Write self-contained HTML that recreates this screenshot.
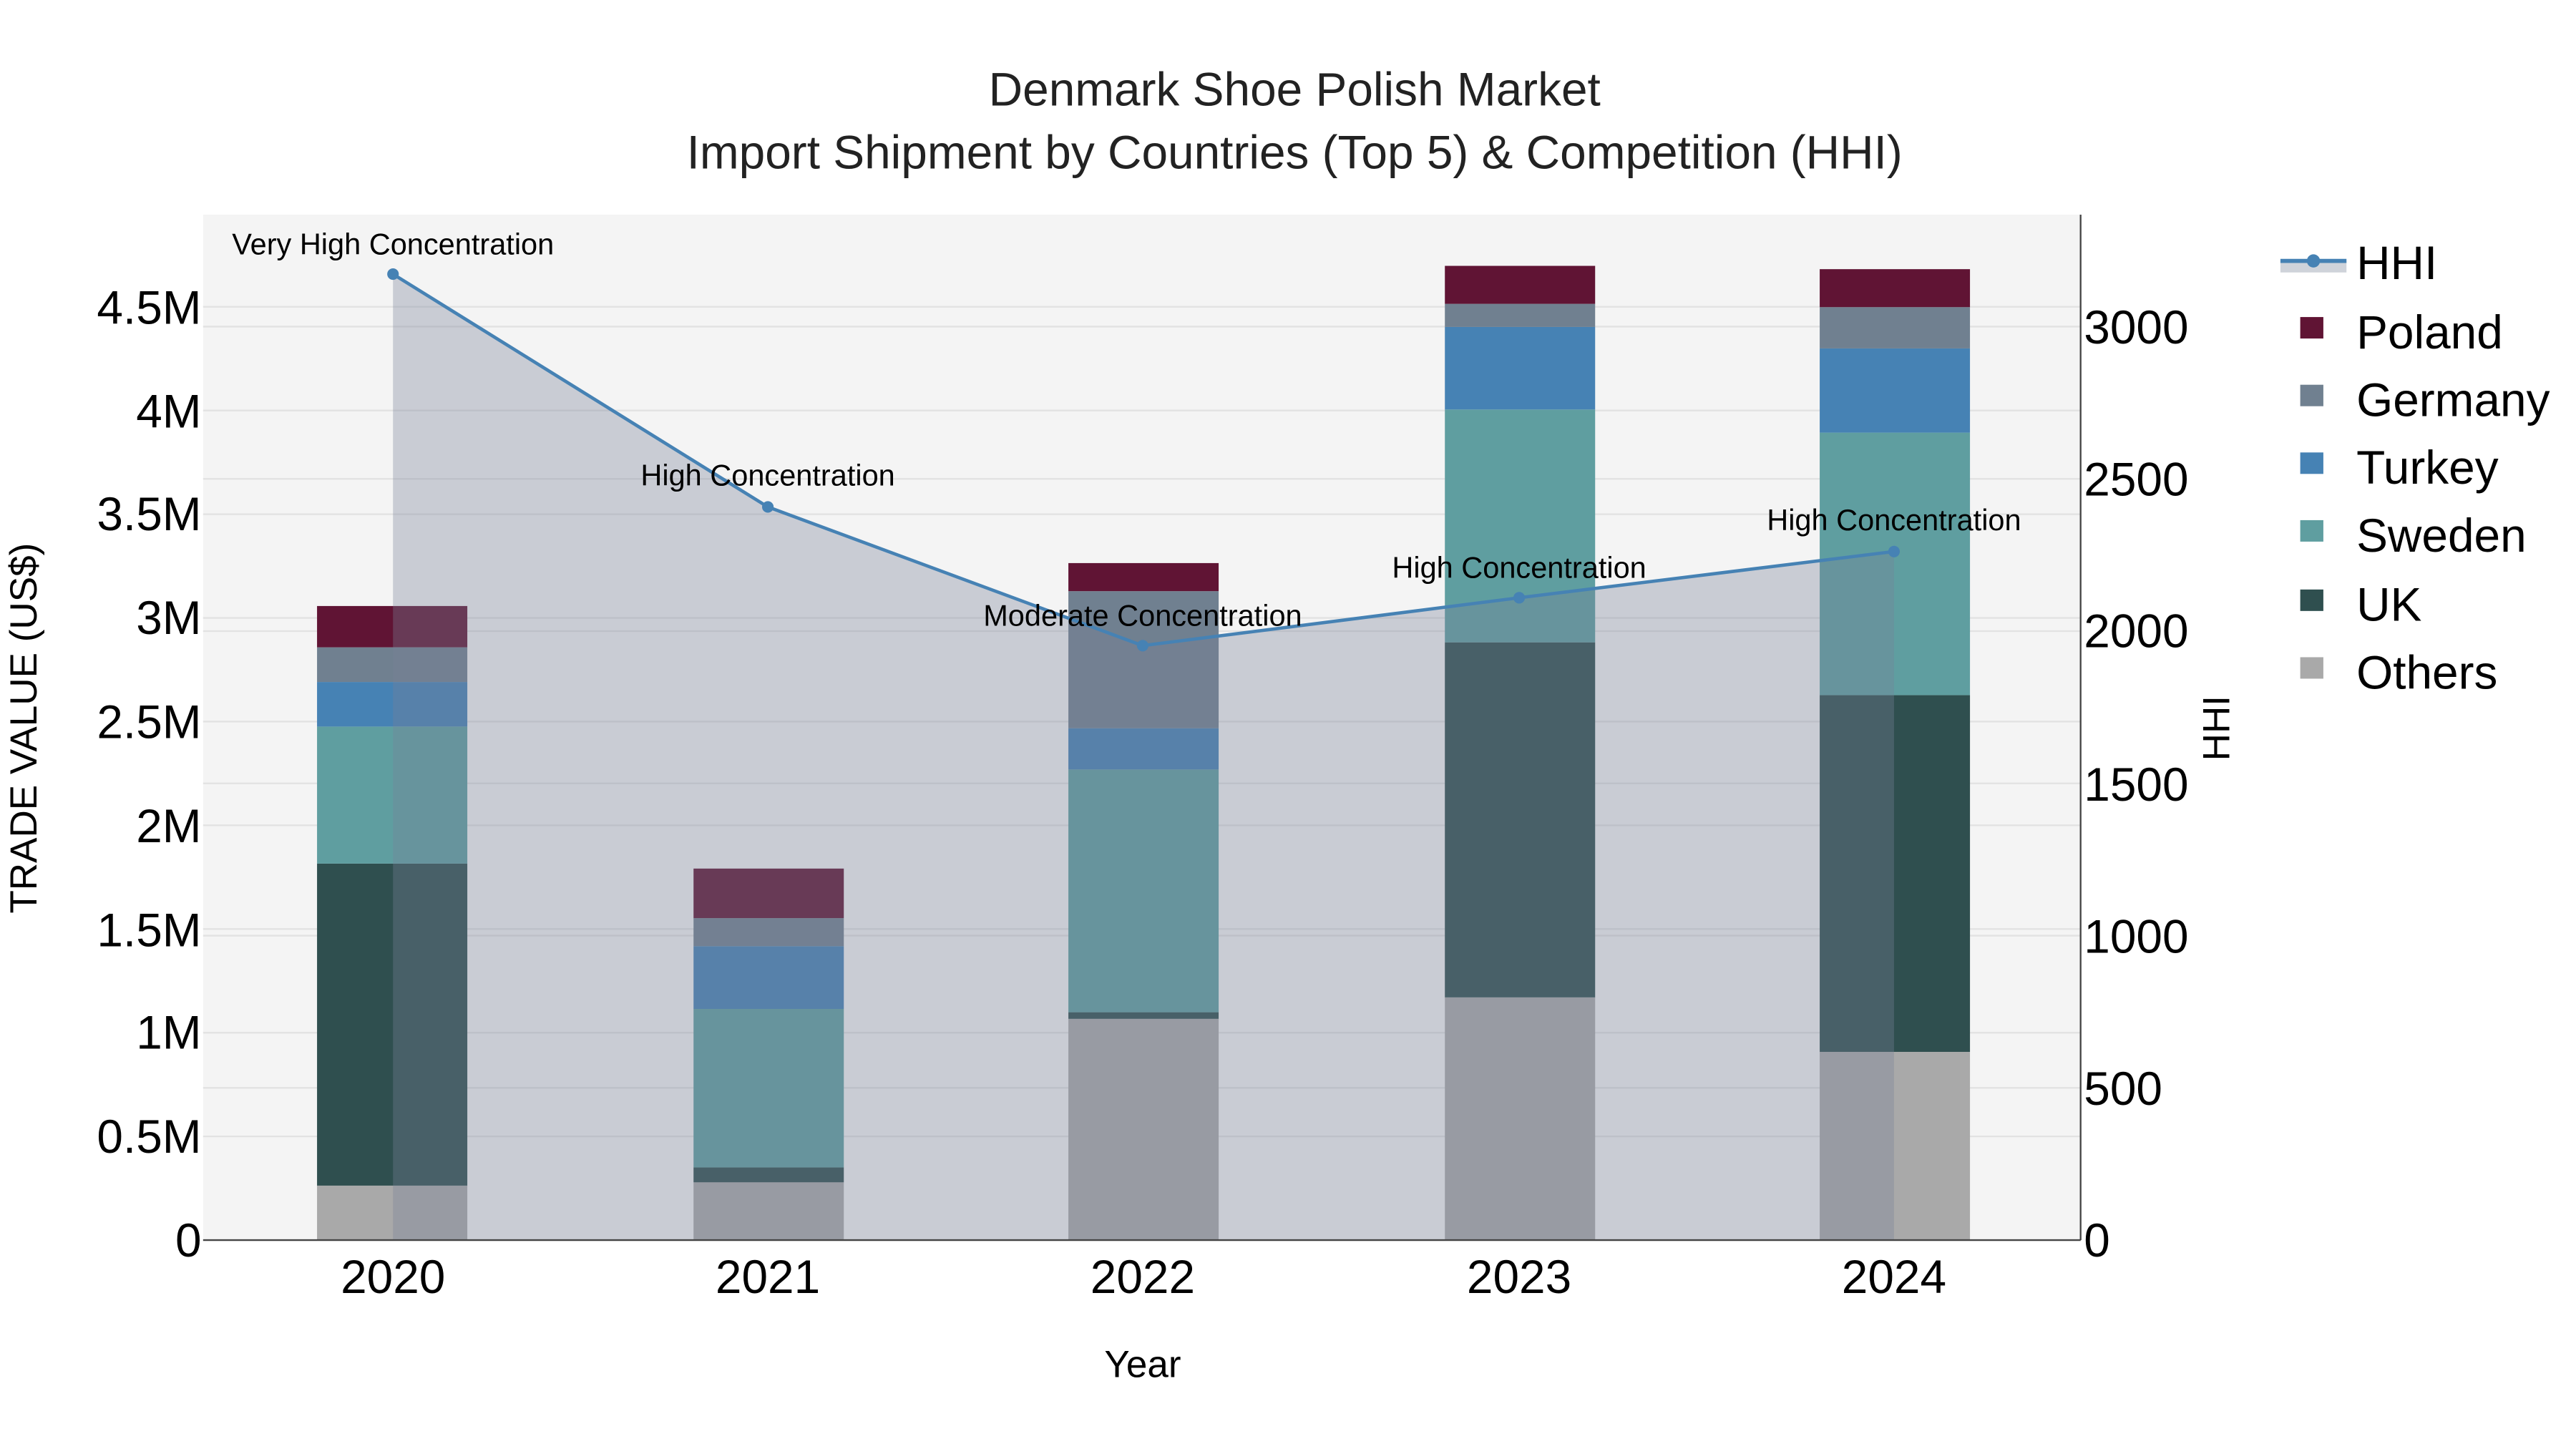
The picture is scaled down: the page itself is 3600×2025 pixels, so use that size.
<!DOCTYPE html>
<html><head><meta charset="utf-8"><style>html,body{margin:0;padding:0;background:#fff}svg{display:block}</style></head>
<body>
<svg width="3600" height="2025" viewBox="0 0 1560 877.5" xmlns="http://www.w3.org/2000/svg" font-family="'Liberation Sans', sans-serif">
<rect width="1560" height="877.5" fill="#fff"/>
<rect x="123" y="130" width="1137" height="621" fill="#f4f4f4"/>
<g stroke="#e2e2e2" stroke-width="1">
<line x1="123" x2="1260" y1="688.2" y2="688.2"/><line x1="123" x2="1260" y1="625.4" y2="625.4"/><line x1="123" x2="1260" y1="562.6" y2="562.6"/><line x1="123" x2="1260" y1="499.8" y2="499.8"/><line x1="123" x2="1260" y1="437" y2="437"/><line x1="123" x2="1260" y1="374.2" y2="374.2"/><line x1="123" x2="1260" y1="311.4" y2="311.4"/><line x1="123" x2="1260" y1="248.6" y2="248.6"/><line x1="123" x2="1260" y1="185.8" y2="185.8"/>
<line x1="123" x2="1260" y1="658.8" y2="658.8"/><line x1="123" x2="1260" y1="566.6" y2="566.6"/><line x1="123" x2="1260" y1="474.4" y2="474.4"/><line x1="123" x2="1260" y1="382.2" y2="382.2"/><line x1="123" x2="1260" y1="290" y2="290"/><line x1="123" x2="1260" y1="197.8" y2="197.8"/>
</g>
<g>
<rect x="192" y="718" width="91" height="33" fill="#a9a9a9"/>
<rect x="192" y="523" width="91" height="195" fill="#2f4f4f"/>
<rect x="192" y="440" width="91" height="83" fill="#5f9ea0"/>
<rect x="192" y="413" width="91" height="27" fill="#4682b4"/>
<rect x="192" y="392" width="91" height="21" fill="#708090"/>
<rect x="192" y="367" width="91" height="25" fill="#601434"/>
<rect x="420" y="716" width="91" height="35" fill="#a9a9a9"/>
<rect x="420" y="707" width="91" height="9" fill="#2f4f4f"/>
<rect x="420" y="611" width="91" height="96" fill="#5f9ea0"/>
<rect x="420" y="573" width="91" height="38" fill="#4682b4"/>
<rect x="420" y="556" width="91" height="17" fill="#708090"/>
<rect x="420" y="526" width="91" height="30" fill="#601434"/>
<rect x="647" y="617" width="91" height="134" fill="#a9a9a9"/>
<rect x="647" y="613" width="91" height="4" fill="#2f4f4f"/>
<rect x="647" y="466" width="91" height="147" fill="#5f9ea0"/>
<rect x="647" y="441" width="91" height="25" fill="#4682b4"/>
<rect x="647" y="358" width="91" height="83" fill="#708090"/>
<rect x="647" y="341" width="91" height="17" fill="#601434"/>
<rect x="875" y="604" width="91" height="147" fill="#a9a9a9"/>
<rect x="875" y="389" width="91" height="215" fill="#2f4f4f"/>
<rect x="875" y="248" width="91" height="141" fill="#5f9ea0"/>
<rect x="875" y="198" width="91" height="50" fill="#4682b4"/>
<rect x="875" y="184" width="91" height="14" fill="#708090"/>
<rect x="875" y="161" width="91" height="23" fill="#601434"/>
<rect x="1102" y="637" width="91" height="114" fill="#a9a9a9"/>
<rect x="1102" y="421" width="91" height="216" fill="#2f4f4f"/>
<rect x="1102" y="262" width="91" height="159" fill="#5f9ea0"/>
<rect x="1102" y="211" width="91" height="51" fill="#4682b4"/>
<rect x="1102" y="186" width="91" height="25" fill="#708090"/>
<rect x="1102" y="163" width="91" height="23" fill="#601434"/>
</g>
<path d="M238,166 L465,307 L692,391 L920,362 L1147,334 L1147,751 L238,751 Z" fill="rgba(120,129,152,0.35)"/>
<polyline points="238,166 465,307 692,391 920,362 1147,334" fill="none" stroke="#4682b4" stroke-width="2"/>
<g fill="#4682b4"><circle cx="238" cy="166" r="3.5"/><circle cx="465" cy="307" r="3.5"/><circle cx="692" cy="391" r="3.5"/><circle cx="920" cy="362" r="3.5"/><circle cx="1147" cy="334" r="3.5"/></g>
<g font-size="18" fill="#000" text-anchor="middle">
<text x="238" y="154">Very High Concentration</text>
<text x="465" y="294">High Concentration</text>
<text x="692" y="379">Moderate Concentration</text>
<text x="920" y="350">High Concentration</text>
<text x="1147" y="321">High Concentration</text>
</g>
<line x1="123" x2="1260" y1="751" y2="751" stroke="#444" stroke-width="1"/>
<line x1="1260" x2="1260" y1="130" y2="751" stroke="#444" stroke-width="1"/>
<g font-size="28.5" fill="#000" text-anchor="end">
<text x="122" y="761">0</text><text x="122" y="698">0.5M</text><text x="122" y="635">1M</text><text x="122" y="573">1.5M</text><text x="122" y="510">2M</text><text x="122" y="447">2.5M</text><text x="122" y="384">3M</text><text x="122" y="321">3.5M</text><text x="122" y="259">4M</text><text x="122" y="196">4.5M</text>
</g>
<g font-size="28.5" fill="#000" text-anchor="start">
<text x="1262" y="761">0</text><text x="1262" y="669">500</text><text x="1262" y="577">1000</text><text x="1262" y="485">1500</text><text x="1262" y="392">2000</text><text x="1262" y="300">2500</text><text x="1262" y="208">3000</text>
</g>
<g font-size="28.5" fill="#000" text-anchor="middle">
<text x="238" y="783">2020</text><text x="465" y="783">2021</text><text x="692" y="783">2022</text><text x="920" y="783">2023</text><text x="1147" y="783">2024</text>
</g>
<text x="692" y="834" font-size="23" text-anchor="middle">Year</text>
<text transform="translate(22,441) rotate(-90)" font-size="23" text-anchor="middle">TRADE VALUE (US$)</text>
<text transform="translate(1350,441) rotate(-90)" font-size="23" text-anchor="middle">HHI</text>
<g font-size="28.5" text-anchor="middle" fill="#222">
<text x="784" y="64">Denmark Shoe Polish Market</text>
<text x="784" y="102">Import Shipment by Countries (Top 5) &amp; Competition (HHI)</text>
</g>
<rect x="1381" y="158" width="40" height="7" fill="#cfd3da"/>
<line x1="1381" x2="1421" y1="158" y2="158" stroke="#4682b4" stroke-width="2.5"/>
<circle cx="1401" cy="158" r="4" fill="#4682b4"/>
<g font-size="28.5" fill="#000">
<text x="1427" y="169">HHI</text>
<text x="1427" y="211">Poland</text>
<text x="1427" y="252">Germany</text>
<text x="1427" y="293">Turkey</text>
<text x="1427" y="334">Sweden</text>
<text x="1427" y="376">UK</text>
<text x="1427" y="417">Others</text>
</g>
<rect x="1393" y="192" width="14" height="13" fill="#601434"/>
<rect x="1393" y="233" width="14" height="13" fill="#708090"/>
<rect x="1393" y="274" width="14" height="13" fill="#4682b4"/>
<rect x="1393" y="315" width="14" height="13" fill="#5f9ea0"/>
<rect x="1393" y="357" width="14" height="13" fill="#2f4f4f"/>
<rect x="1393" y="398" width="14" height="13" fill="#a9a9a9"/>
</svg>
</body></html>
